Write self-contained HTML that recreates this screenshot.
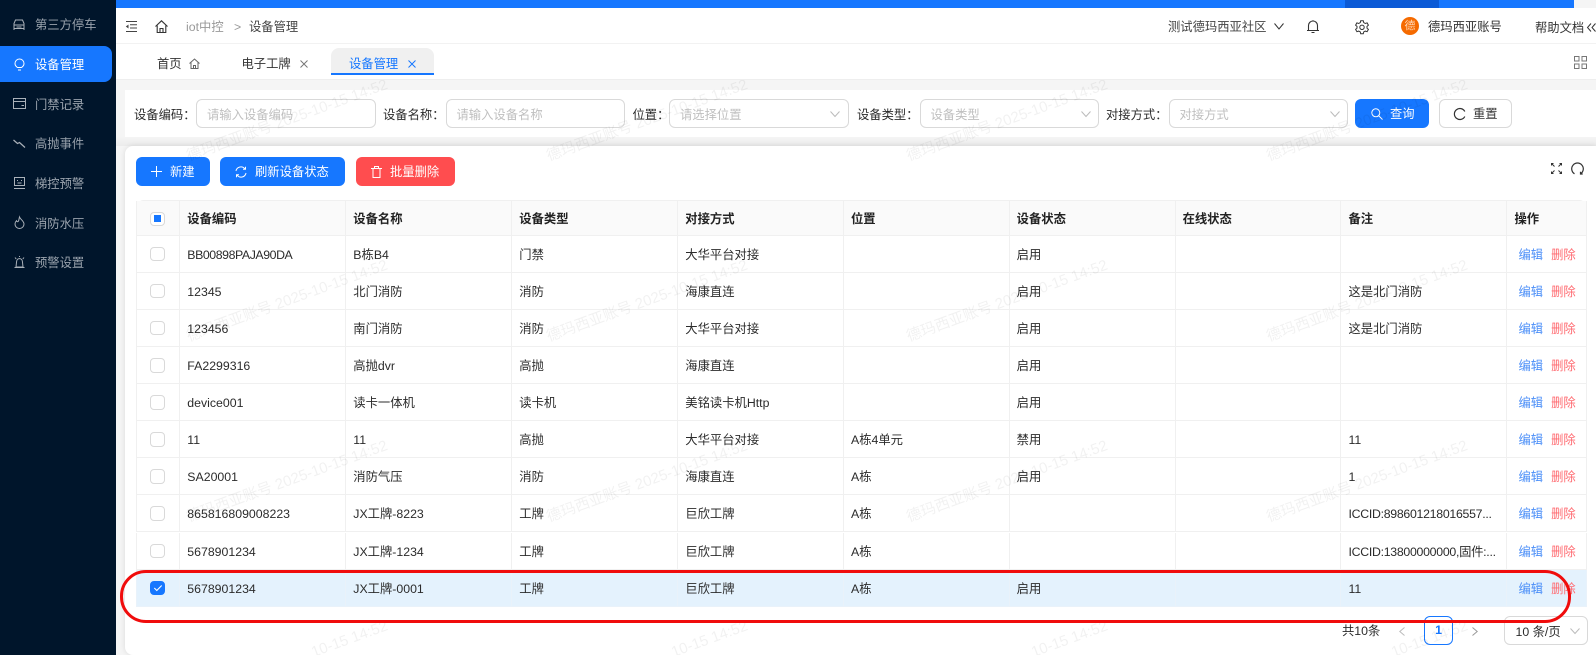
<!DOCTYPE html>
<html lang="zh"><head><meta charset="utf-8"><title>设备管理</title>
<style>
*{box-sizing:border-box}
html,body{margin:0;padding:0;width:1596px;height:655px;overflow:hidden;background:#f5f5f5}
body{position:relative;font-family:"Liberation Sans","Noto Sans CJK SC",sans-serif;font-size:12.32px;color:#2b2b2b}
.a{position:absolute}
.t{position:absolute;white-space:nowrap;line-height:20px;height:20px}
svg{position:absolute;display:block;fill:none;stroke:currentColor;stroke-width:1;overflow:visible}
#side{left:0;top:0;width:116px;height:655px;background:#00152b;overflow:hidden}
#side .t{left:35px;color:#9aa3ad}
#side svg{color:#aab1b9}
.inp{position:absolute;top:99px;height:29px;border:1px solid #d9d9d9;border-radius:6px;background:#fff}
.inp span{position:absolute;left:10px;top:5px;line-height:20px;color:#bfbfbf;white-space:nowrap}
.btn{position:absolute;height:29px;border-radius:6px;color:#fff;background:#1677ff;line-height:29px;white-space:nowrap}
.btn span{position:absolute;top:1px}
.r{position:absolute;left:136px;width:1451px;height:37.1px;border-bottom:1px solid #f0f0f0;display:flex;line-height:38px;background:#fff}
.r>div{height:100%;border-left:1px solid #f0f0f0;padding-left:7px;white-space:nowrap;overflow:hidden}
.r>div:last-child{border-right:1px solid #f0f0f0}
.c0{width:43.3px}.c1,.c2,.c3{width:166px}.c4,.c5{width:165.7px}.c6{width:165.9px}.c7{width:166px}.c8{width:80.5px;padding-left:11px!important}
.h{font-weight:bold;background:#fafafa;border-top:1px solid #f0f0f0;border-radius:8px 8px 0 0;height:36.2px;color:#222;line-height:36px}
.h>div{background:#fafafa}
.cb{position:relative;display:block;width:14.5px;height:14.5px;border:1px solid #d9d9d9;border-radius:4px;background:#fff;margin:11px 0 0 6.3px}
.h .cb:after{content:"";position:absolute;left:2.6px;top:2.6px;width:7.3px;height:7.3px;background:#1677ff}
.e{color:#4a8ef8}.d{color:#ff6a70;margin-left:8px}
.s,.s>div{background:#e4f2fd;border-color:#e9f2fa!important}
.s .cb{background:#1677ff;border-color:#1677ff}
.s svg{color:#fff}
.n{letter-spacing:-.42px}.m{letter-spacing:-.28px}
</style></head><body>

<div class="a" style="left:116px;top:0;width:1458px;height:8px;background:#1677ff"></div>
<div class="a" style="left:1345px;top:0;width:94px;height:8px;background:#0b5ad6"></div>

<div class="a" id="side">
<div class="a" style="left:0;top:46px;width:112px;height:36px;background:#1677ff;border-radius:0 8px 8px 0"></div>
<svg style="left:13px;top:19px" width="12" height="12" viewBox="0 0 12 12"><path d="M1 11V4.500L2.500 1h7L11 4.500V11M1 6h10M1 9.500h10M3.500 8h5"/></svg>
<div class="t" style="top:15px">第三方停车</div>
<svg style="left:14px;top:58px;color:#fff" width="11" height="13" viewBox="0 0 11 13"><path d="M3.500 9.500C2 8.500 1 7 1 5.500a4.500 4.500 0 0 1 9 0c0 1.500-1 3-2.500 4zM4 12h3"/></svg>
<div class="t" style="top:55px;color:#fff">设备管理</div>
<svg style="left:13px;top:98px" width="13" height="11" viewBox="0 0 13 11"><path d="M.5.500h12v10H.5zM.5 3.500h12M8.500 7.500h2.500"/></svg>
<div class="t" style="top:95px">门禁记录</div>
<svg style="left:13px;top:139px" width="13" height="9" viewBox="0 0 13 9"><path d="M.5 1l4 3.500 2-1 5.500 5" stroke-width="1.200"/></svg>
<div class="t" style="top:134px">高抛事件</div>
<svg style="left:14px;top:177px" width="11" height="12" viewBox="0 0 11 12"><path d="M.5.500h10v8H.5zM0 11.500h11M3 3.500h1M7 3.500h1M3.500 6h4"/></svg>
<div class="t" style="top:174px">梯控预警</div>
<svg style="left:14px;top:216px" width="11" height="13" viewBox="0 0 11 13"><path d="M5.500 1C6 3 10 5 10 8a4.500 4.500 0 0 1-9 0c0-1.500.7-2.500 1.500-3.300C3 6 4 6 4.500 5 5 4 5 2.500 5.500 1z"/></svg>
<div class="t" style="top:214px">消防水压</div>
<svg style="left:14px;top:256px" width="11" height="12" viewBox="0 0 11 12"><path d="M2 11l.6-5.500a2.900 2.900 0 0 1 5.800 0L9 11zM.5 11.500h10M1 1.500l1.200 1.500M10 1.500L8.800 3M5.500 0v1"/></svg>
<div class="t" style="top:253px">预警设置</div>
</div>

<!-- header -->
<div class="a" style="left:116px;top:8px;width:1480px;height:36px;background:#fff;border-bottom:1px solid #f2f2f2"></div>
<svg style="left:125px;top:21px;color:#444" width="12" height="11" viewBox="0 0 12 11"><path d="M1 .5h11M5 3.800h7M5 7h7M1 10.500h11"/><path d="M3.500 3.500L.8 5.500l2.700 2z" fill="#444" stroke="none"/></svg>
<svg style="left:155px;top:20px;color:#333" width="13" height="13" viewBox="0 0 13 13"><path d="M.5 6.500L6.500.8l6 5.700M2.200 5.500v7h8.600v-7M5 12.500V8.500h3v4" stroke-width="1.100"/></svg>
<div class="t" style="left:186px;top:17px;color:#999">iot中控</div>
<div class="t" style="left:234px;top:17px;color:#999">&gt;</div>
<div class="t" style="left:249px;top:17px;color:#444">设备管理</div>
<div class="t" style="left:1168px;top:17px;color:#444">测试德玛西亚社区</div>
<svg style="left:1274px;top:23px;color:#333" width="10" height="7" viewBox="0 0 10 7"><path d="M.5.500L5 6 9.500.500"/></svg>
<svg style="left:1307px;top:20px;color:#333" width="12" height="13" viewBox="0 0 12 13"><path d="M1.500 10.500V5.500a4.500 4.500 0 0 1 9 0v5zM0 10.500h12M4.500 12.500h3M6 .2v1" stroke-width="1.100"/></svg>
<svg style="left:1355px;top:20px;color:#333" width="14" height="14" viewBox="0 0 14 14"><path d="M5.700.8h2.600l.4 1.800 1.600.9 1.800-.6 1.300 2.300-1.400 1.200v1.800l1.400 1.200-1.300 2.300-1.800-.6-1.600.9-.4 1.800H5.700l-.4-1.800-1.600-.9-1.800.6L.6 9.400 2 8.200V6.400L.6 5.200l1.300-2.300 1.800.6 1.600-.9z"/><circle cx="7" cy="7.300" r="2.200"/></svg>
<div class="a" style="left:1401px;top:17px;width:18px;height:18px;border-radius:50%;background:#f56a00;color:#ffd9b8;text-align:center;line-height:18px;font-size:11px">德</div>
<div class="t" style="left:1428px;top:17px;color:#333">德玛西亚账号</div>
<div class="t" style="left:1535px;top:18px;color:#333">帮助文档</div>
<svg style="left:1587px;top:23px;color:#333" width="9" height="9" viewBox="0 0 9 9"><path d="M4 .5L.5 4.500 4 8.500M8.500.5L5 4.500l3.500 4"/></svg>

<!-- tabs -->
<div class="a" style="left:116px;top:44px;width:1480px;height:36px;background:#fff;border-bottom:1px solid #eee"></div>
<div class="t" style="left:157px;top:54px;color:#333">首页</div>
<svg style="left:189px;top:58px;color:#666" width="11" height="11" viewBox="0 0 11 11"><path d="M.5 5.500L5.500 1l5 4.500M2 4.500v6h7v-6M4.500 10.500V7.500h2v3"/></svg>
<div class="t" style="left:241.500px;top:54px;color:#333">电子工牌</div>
<svg style="left:300px;top:60px;color:#777" width="8" height="8" viewBox="0 0 8 8"><path d="M.5.500l7 7M7.500.500l-7 7"/></svg>
<div class="a" style="left:331px;top:48px;width:103px;height:27px;background:#f0f0f0;border-radius:8px 8px 0 0;border-bottom:2px solid #1677ff"></div>
<div class="t" style="left:349px;top:54px;color:#1677ff">设备管理</div>
<svg style="left:408px;top:60px;color:#1677ff" width="8" height="8" viewBox="0 0 8 8"><path d="M.5.500l7 7M7.500.500l-7 7"/></svg>
<svg style="left:1574px;top:56px;color:#777" width="13" height="13" viewBox="0 0 13 13"><path d="M.5.500h4.500V5H.5zM8 .500h4.500V5H8zM.5 8H5v4.500H.5zM8 8h4.500v4.500H8z"/></svg>

<!-- filter -->
<div class="a" style="left:125px;top:90px;width:1471px;height:47px;background:#fff"></div>
<div class="a" style="left:116px;top:137px;width:1480px;height:9px;background:linear-gradient(#f5f5f5,#ececec)"></div>
<div class="t" style="left:134px;top:105px">设备编码：</div>
<div class="inp" style="left:196px;width:180px"><span>请输入设备编码</span></div>
<div class="t" style="left:383px;top:105px">设备名称：</div>
<div class="inp" style="left:445.500px;width:179.500px"><span>请输入设备名称</span></div>
<div class="t" style="left:632.500px;top:105px">位置：</div>
<div class="inp" style="left:669px;width:179.500px"><span>请选择位置</span><svg style="left:160px;top:11px;color:#bbb" width="10" height="6" viewBox="0 0 10 6"><path d="M.5.500L5 5.500 9.500.500"/></svg></div>
<div class="t" style="left:857px;top:105px">设备类型：</div>
<div class="inp" style="left:919.500px;width:179px"><span>设备类型</span><svg style="left:160px;top:11px;color:#bbb" width="10" height="6" viewBox="0 0 10 6"><path d="M.5.500L5 5.500 9.500.500"/></svg></div>
<div class="t" style="left:1106px;top:105px">对接方式：</div>
<div class="inp" style="left:1168.500px;width:179px"><span>对接方式</span><svg style="left:160px;top:11px;color:#bbb" width="10" height="6" viewBox="0 0 10 6"><path d="M.5.500L5 5.500 9.500.500"/></svg></div>
<div class="btn" style="left:1355px;top:99px;width:74px"><svg style="left:16px;top:9px;color:#fff" width="12" height="12" viewBox="0 0 12 12"><circle cx="4.800" cy="4.800" r="4"/><path d="M7.800 7.800l3.700 3.700"/></svg><span style="left:35px">查询</span></div>
<div class="btn" style="left:1438.500px;top:99px;width:73px;background:#fff;border:1px solid #d9d9d9;color:#333;line-height:27px"><svg style="left:14px;top:8px;color:#333" width="12" height="12" viewBox="0 0 12 12"><path d="M10.800 3.500A5.500 5.500 0 1 0 10.800 8.500" stroke-width="1.200"/></svg><span style="left:33.500px">重置</span></div>

<!-- card -->
<div class="a" style="left:125px;top:146px;width:1471px;height:509px;background:#fff;border-radius:8px 0 0 8px;box-shadow:0 0 6px rgba(0,0,0,.11)"></div>
<div class="btn" style="left:136px;top:157px;width:74px"><svg style="left:15px;top:9px;color:#fff" width="11" height="11" viewBox="0 0 11 11"><path d="M5.500 0v11M0 5.500h11"/></svg><span style="left:34px">新建</span></div>
<div class="btn" style="left:220px;top:157px;width:125px"><svg style="left:15px;top:9px;color:#fff" width="12" height="12" viewBox="0 0 12 12"><path d="M1 5a5 5 0 0 1 9-2M11 7a5 5 0 0 1-9 2M10.500 .8v2.500H8M1.500 11.200V8.700H4"/></svg><span style="left:35px">刷新设备状态</span></div>
<div class="btn" style="left:356px;top:157px;width:99px;background:#ff4d4f"><svg style="left:15px;top:9px;color:#fff" width="11" height="12" viewBox="0 0 11 12"><path d="M0 2.500h11M2 2.500v9h7v-9M3.500 2.500V.5h4v2"/></svg><span style="left:34px">批量删除</span></div>
<svg style="left:1551px;top:163px;color:#333" width="11" height="11" viewBox="0 0 11 11"><path d="M.5.500l3 3M10.500.500l-3 3M.5 10.500l3-3M10.500 10.500l-3-3M.5 2.500v-2h2M8.500.5h2v2M.5 8.500v2h2M8.500 10.500h2v-2"/></svg>
<svg style="left:1571px;top:162px;color:#333" width="13" height="13" viewBox="0 0 13 13"><path d="M3.500 11.800A5.800 5.800 0 1 1 9.500 11.800M9.500 9.800v2.200h2.200" stroke-width="1.200"/></svg>

<!-- table -->
<div class="r h" style="top:199.500px"><div class="c0"><i class="cb"></i></div><div class="c1">设备编码</div><div class="c2">设备名称</div><div class="c3">设备类型</div><div class="c4">对接方式</div><div class="c5">位置</div><div class="c6">设备状态</div><div class="c6">在线状态</div><div class="c7">备注</div><div class="c8" style="padding-left:7px!important">操作</div></div>
<div class="r" style="top:235.700px"><div class="c0"><i class="cb"></i></div><div class="c1"><span class="n">BB00898PAJA90DA</span></div><div class="c2">B栋B4</div><div class="c3">门禁</div><div class="c4">大华平台对接</div><div class="c5"></div><div class="c6">启用</div><div class="c6"></div><div class="c7"></div><div class="c8"><span class="e">编辑</span><span class="d">删除</span></div></div>
<div class="r" style="top:272.800px"><div class="c0"><i class="cb"></i></div><div class="c1">12345</div><div class="c2">北门消防</div><div class="c3">消防</div><div class="c4">海康直连</div><div class="c5"></div><div class="c6">启用</div><div class="c6"></div><div class="c7">这是北门消防</div><div class="c8"><span class="e">编辑</span><span class="d">删除</span></div></div>
<div class="r" style="top:309.900px"><div class="c0"><i class="cb"></i></div><div class="c1">123456</div><div class="c2">南门消防</div><div class="c3">消防</div><div class="c4">大华平台对接</div><div class="c5"></div><div class="c6">启用</div><div class="c6"></div><div class="c7">这是北门消防</div><div class="c8"><span class="e">编辑</span><span class="d">删除</span></div></div>
<div class="r" style="top:347px"><div class="c0"><i class="cb"></i></div><div class="c1">FA2299316</div><div class="c2">高抛dvr</div><div class="c3">高抛</div><div class="c4">海康直连</div><div class="c5"></div><div class="c6">启用</div><div class="c6"></div><div class="c7"></div><div class="c8"><span class="e">编辑</span><span class="d">删除</span></div></div>
<div class="r" style="top:384.100px"><div class="c0"><i class="cb"></i></div><div class="c1">device001</div><div class="c2">读卡一体机</div><div class="c3">读卡机</div><div class="c4">美铭读卡机Http</div><div class="c5"></div><div class="c6">启用</div><div class="c6"></div><div class="c7"></div><div class="c8"><span class="e">编辑</span><span class="d">删除</span></div></div>
<div class="r" style="top:421.200px"><div class="c0"><i class="cb"></i></div><div class="c1">11</div><div class="c2">11</div><div class="c3">高抛</div><div class="c4">大华平台对接</div><div class="c5">A栋4单元</div><div class="c6">禁用</div><div class="c6"></div><div class="c7">11</div><div class="c8"><span class="e">编辑</span><span class="d">删除</span></div></div>
<div class="r" style="top:458.300px"><div class="c0"><i class="cb"></i></div><div class="c1">SA20001</div><div class="c2">消防气压</div><div class="c3">消防</div><div class="c4">海康直连</div><div class="c5">A栋</div><div class="c6">启用</div><div class="c6"></div><div class="c7">1</div><div class="c8"><span class="e">编辑</span><span class="d">删除</span></div></div>
<div class="r" style="top:495.400px"><div class="c0"><i class="cb"></i></div><div class="c1">865816809008223</div><div class="c2">JX工牌-8223</div><div class="c3">工牌</div><div class="c4">巨欣工牌</div><div class="c5">A栋</div><div class="c6"></div><div class="c6"></div><div class="c7"><span class="m">ICCID:898601218016557...</span></div><div class="c8"><span class="e">编辑</span><span class="d">删除</span></div></div>
<div class="r" style="top:532.500px"><div class="c0"><i class="cb"></i></div><div class="c1">5678901234</div><div class="c2">JX工牌-1234</div><div class="c3">工牌</div><div class="c4">巨欣工牌</div><div class="c5">A栋</div><div class="c6"></div><div class="c6"></div><div class="c7"><span class="m">ICCID:13800000000,固件:...</span></div><div class="c8"><span class="e">编辑</span><span class="d">删除</span></div></div>
<div class="r s" style="top:569.600px"><div class="c0"><i class="cb"><svg style="left:2.500px;top:3.500px" width="8" height="6" viewBox="0 0 8 6"><path d="M.3 3l2.500 2.500L7.700.5" stroke-width="1.100"/></svg></i></div><div class="c1">5678901234</div><div class="c2">JX工牌-0001</div><div class="c3">工牌</div><div class="c4">巨欣工牌</div><div class="c5">A栋</div><div class="c6">启用</div><div class="c6"></div><div class="c7">11</div><div class="c8"><span class="e">编辑</span><span class="d">删除</span></div></div>

<!-- pagination -->
<div class="t" style="left:1342px;top:621px">共10条</div>
<svg style="left:1399px;top:627px;color:#bbb" width="6" height="9" viewBox="0 0 6 9"><path d="M5.500.5L.8 4.500l4.700 4"/></svg>
<div class="a" style="left:1424px;top:616px;width:29px;height:29px;border:1px solid #1677ff;border-radius:6px;color:#1677ff;text-align:center;line-height:27px;font-weight:bold">1</div>
<svg style="left:1472px;top:627px;color:#999" width="6" height="9" viewBox="0 0 6 9"><path d="M.5.5l4.700 4-4.700 4"/></svg>
<div class="a" style="left:1503.500px;top:616px;width:84px;height:29px;border:1px solid #d9d9d9;border-radius:6px"><span class="t" style="left:11px;top:5px">10 条/页</span><svg style="left:65px;top:11px;color:#bbb" width="10" height="6" viewBox="0 0 10 6"><path d="M.5.500L5 5.500 9.500.500"/></svg></div>

<!-- watermark -->
<svg style="left:116px;top:80px;overflow:hidden;pointer-events:none;stroke:none;fill:rgba(0,0,0,.055);font-size:15px" width="1480" height="575" viewBox="0 0 1480 575" text-anchor="middle">
<text x="171" y="45" transform="rotate(-20 171 40)">德玛西亚账号 2025-10-15 14:52</text><text x="531" y="45" transform="rotate(-20 531 40)">德玛西亚账号 2025-10-15 14:52</text><text x="891" y="45" transform="rotate(-20 891 40)">德玛西亚账号 2025-10-15 14:52</text><text x="1251" y="45" transform="rotate(-20 1251 40)">德玛西亚账号 2025-10-15 14:52</text>
<text x="171" y="225.500" transform="rotate(-20 171 220.500)">德玛西亚账号 2025-10-15 14:52</text><text x="531" y="225.500" transform="rotate(-20 531 220.500)">德玛西亚账号 2025-10-15 14:52</text><text x="891" y="225.500" transform="rotate(-20 891 220.500)">德玛西亚账号 2025-10-15 14:52</text><text x="1251" y="225.500" transform="rotate(-20 1251 220.500)">德玛西亚账号 2025-10-15 14:52</text>
<text x="171" y="406" transform="rotate(-20 171 401)">德玛西亚账号 2025-10-15 14:52</text><text x="531" y="406" transform="rotate(-20 531 401)">德玛西亚账号 2025-10-15 14:52</text><text x="891" y="406" transform="rotate(-20 891 401)">德玛西亚账号 2025-10-15 14:52</text><text x="1251" y="406" transform="rotate(-20 1251 401)">德玛西亚账号 2025-10-15 14:52</text>
<text x="271" y="550" text-anchor="end" transform="rotate(-20 271 545)">10-15 14:52</text><text x="631" y="550" text-anchor="end" transform="rotate(-20 631 545)">10-15 14:52</text><text x="991" y="550" text-anchor="end" transform="rotate(-20 991 545)">10-15 14:52</text><text x="1351" y="550" text-anchor="end" transform="rotate(-20 1351 545)">10-15 14:52</text>
</svg>

<!-- red annotation -->
<div class="a" style="left:120px;top:569.500px;width:1451px;height:53px;border:3px solid #f00c0c;border-radius:26px;pointer-events:none"></div>
</body></html>
